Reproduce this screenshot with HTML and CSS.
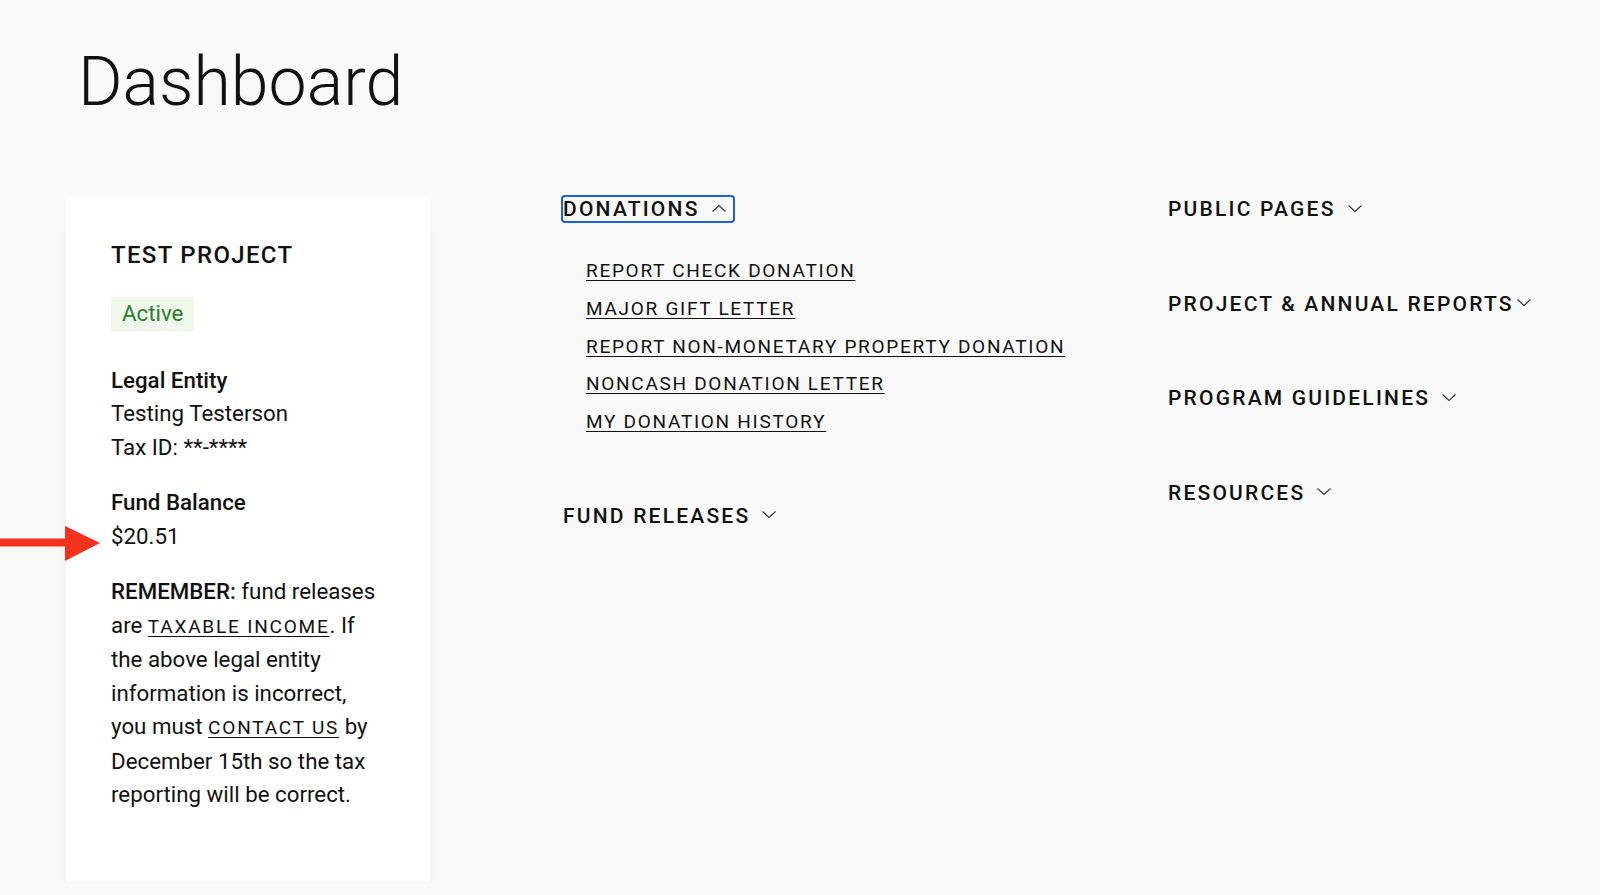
FILE: index.html
```html
<!DOCTYPE html>
<html lang="en">
<head>
    <meta charset="UTF-8">
    <meta name="viewport" content="width=device-width, initial-scale=1.0">
    <title>Dashboard</title>
    <link rel="stylesheet" href="styles.css">
</head>
<body>
    <div class="page">
        <h1>Dashboard</h1>

        <div class="grid">
            <div class="card">
                <h3 class="project-name">TEST PROJECT</h3>
                <span class="badge">Active</span>

                <p>
                    <strong>Legal Entity</strong><br>
                    Testing Testerson<br>
                    Tax ID: **-****
                </p>

                <p>
                    <strong>Fund Balance</strong><br>
                    $20.51
                </p>

                <p>
                    <strong>REMEMBER:</strong> fund releases are <a href="#" class="caps">TAXABLE INCOME</a>. If the above legal entity information is incorrect, you must <a href="#" class="caps">CONTACT US</a> by December 15th so the tax reporting will be correct.
                </p>
            </div>

            <div class="col">
                <div class="menu">
                    <button class="toggle focused">DONATIONS
                        <svg class="chev" width="16" height="9" viewBox="0 0 16 9"><path d="M1.5 7.5 L8 1.5 L14.5 7.5" fill="none" stroke="#333" stroke-width="1.1"/></svg>
                    </button>
                    <ul class="links">
                        <li><a href="#">REPORT CHECK DONATION</a></li>
                        <li><a href="#">MAJOR GIFT LETTER</a></li>
                        <li><a href="#">REPORT NON-MONETARY PROPERTY DONATION</a></li>
                        <li><a href="#">NONCASH DONATION LETTER</a></li>
                        <li><a href="#">MY DONATION HISTORY</a></li>
                    </ul>
                </div>
                <div class="menu">
                    <button class="toggle">FUND RELEASES
                        <svg class="chev" width="16" height="9" viewBox="0 0 16 9"><path d="M1.5 1.5 L8 7.5 L14.5 1.5" fill="none" stroke="#333" stroke-width="1.1"/></svg>
                    </button>
                </div>
            </div>

            <div class="col side">
                <div class="menu">
                    <button class="toggle">PUBLIC PAGES
                        <svg class="chev" width="16" height="9" viewBox="0 0 16 9"><path d="M1.5 1.5 L8 7.5 L14.5 1.5" fill="none" stroke="#333" stroke-width="1.1"/></svg>
                    </button>
                </div>
                <div class="menu">
                    <button class="toggle tight">PROJECT &amp; ANNUAL REPORTS
                        <svg class="chev" width="16" height="9" viewBox="0 0 16 9"><path d="M1.5 1.5 L8 7.5 L14.5 1.5" fill="none" stroke="#333" stroke-width="1.1"/></svg>
                    </button>
                </div>
                <div class="menu">
                    <button class="toggle">PROGRAM GUIDELINES
                        <svg class="chev" width="16" height="9" viewBox="0 0 16 9"><path d="M1.5 1.5 L8 7.5 L14.5 1.5" fill="none" stroke="#333" stroke-width="1.1"/></svg>
                    </button>
                </div>
                <div class="menu">
                    <button class="toggle">RESOURCES
                        <svg class="chev" width="16" height="9" viewBox="0 0 16 9"><path d="M1.5 1.5 L8 7.5 L14.5 1.5" fill="none" stroke="#333" stroke-width="1.1"/></svg>
                    </button>
                </div>
            </div>
        </div>
    </div>

    <!-- annotation arrow -->
    <svg class="arrow" width="100" height="36" viewBox="0 0 100 36">
        <rect x="0" y="12.5" width="67" height="8" fill="#f2311f"/>
        <polygon points="65,0 100,17 65,35" fill="#f2311f"/>
    </svg>
</body>
</html>
```

FILE: styles.css
```css
body {
    font-family: Roboto, "Liberation Sans", Arial, sans-serif;
    margin: 0;
    padding: 0;
    background-color: #f9f9f9;
    color: #111;
}

.page {
    padding-left: 66px;
}

h1 {
    font-size: 68px;
    font-weight: 300;
    line-height: 84px;
    margin: 40px 0 72px 12px;
    color: #111;
}

.grid {
    display: grid;
    grid-template-columns: 364px 474px 1fr;
    column-gap: 131px;
    align-items: start;
}

.card {
    background-color: #fff;
    padding: 43px 48px 69px 45px;
    font-size: 22.3px;
    line-height: 33.5px;
    box-shadow: 0 28px 20px -14px rgba(0, 0, 0, 0.3);
}

.project-name {
    font-size: 24px;
    font-weight: 500;
    letter-spacing: 0.055em;
    line-height: 33px;
    margin: 0 0 25px 0;
}

.badge {
    display: block;
    width: fit-content;
    background-color: #eef7e9;
    color: #2e7d32;
    padding: 0 11px;
    margin-bottom: 33px;
}

.card p {
    margin: 0 0 22px 0;
}

.card p:last-child {
    margin-bottom: 0;
}

.card strong {
    font-weight: 500;
}

a {
    color: #111;
}

a.caps {
    font-size: 19px;
    letter-spacing: 0.095em;
    text-underline-offset: 3px;
}

.col {
    margin-top: -1px;
}

.toggle {
    display: inline-flex;
    align-items: center;
    gap: 11px;
    font-family: inherit;
    font-size: 21px;
    font-weight: 500;
    letter-spacing: 0.105em;
    line-height: 24px;
    color: #111;
    background: none;
    border: 2px solid transparent;
    border-radius: 4px;
    padding: 0 6px 0 0;
    cursor: pointer;
}

.toggle.focused {
    border-color: #1a62d6;
}

.toggle.tight {
    gap: 2px;
}

.chev {
    margin-top: -2px;
}

.links {
    list-style: none;
    margin: 29px 0 61px 0;
    padding: 0 0 0 25px;
}

.links li {
    font-size: 19px;
    line-height: 37.75px;
    letter-spacing: 0.09em;
    white-space: nowrap;
}

.links a {
    text-underline-offset: 3px;
}

.side .menu {
    margin-bottom: 66.5px;
}

.arrow {
    position: absolute;
    left: 0;
    top: 526px;
}
```
